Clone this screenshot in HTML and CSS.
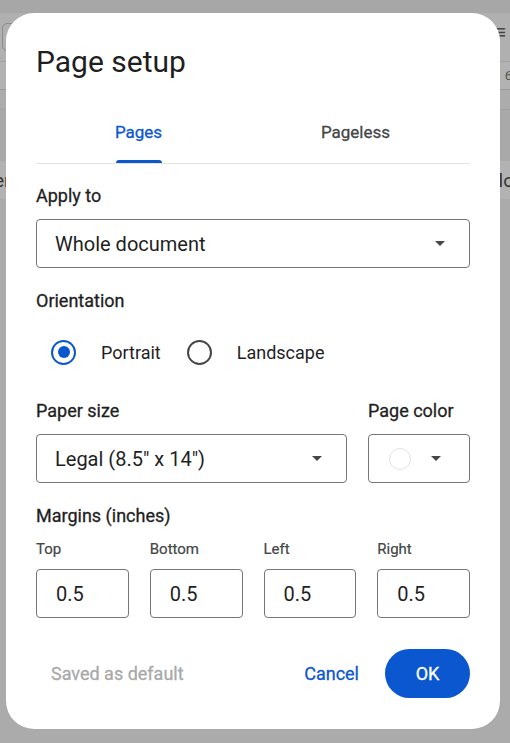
FILE: index.html
```html
<!DOCTYPE html>
<html lang="en">
<head>
    <meta charset="UTF-8">
    <meta name="viewport" content="width=device-width, initial-scale=1.0">
    <title>Page setup</title>
    <link rel="stylesheet" href="styles.css">
</head>
<body>
    <!-- Document behind the scrim -->
    <div class="backdrop">
        <div class="strip-top"></div>
        <div class="toolbar">
            <div class="tool-box"></div>
            <div class="tool-menu">&#8801;</div>
        </div>
        <div class="ruler">
            <span class="ruler-num">6</span>
        </div>
        <div class="ruler-gap"></div>
        <div class="doc-gap"></div>
        <div class="doc-line">
            <span>er</span>
            <span>lo</span>
        </div>
    </div>

    <div class="dialog">
        <h1 class="title">Page setup</h1>

        <div class="tabs">
            <div class="tab-list">
                <div class="tab active">Pages<span class="indicator"></span></div>
                <div class="tab">Pageless</div>
            </div>
        </div>

        <div class="label first">Apply to</div>
        <div class="select">
            <span>Whole document</span>
            <span class="arrow"></span>
        </div>

        <div class="label">Orientation</div>
        <div class="radios">
            <div class="radio checked"><span class="dot"></span></div>
            <span class="radio-label">Portrait</span>
            <div class="radio"></div>
            <span class="radio-label">Landscape</span>
        </div>

        <div class="paper-row">
            <div class="paper-col">
                <div class="label">Paper size</div>
                <div class="select">
                    <span>Legal (8.5" x 14")</span>
                    <span class="arrow"></span>
                </div>
            </div>
            <div class="color-col">
                <div class="label">Page color</div>
                <div class="select color-select">
                    <span class="swatch"></span>
                    <span class="arrow"></span>
                </div>
            </div>
        </div>

        <div class="label">Margins (inches)</div>
        <div class="margins">
            <div class="margin-field">
                <div class="small-label">Top</div>
                <div class="input">0.5</div>
            </div>
            <div class="margin-field">
                <div class="small-label">Bottom</div>
                <div class="input">0.5</div>
            </div>
            <div class="margin-field">
                <div class="small-label">Left</div>
                <div class="input">0.5</div>
            </div>
            <div class="margin-field">
                <div class="small-label">Right</div>
                <div class="input">0.5</div>
            </div>
        </div>

        <div class="footer">
            <span class="saved">Saved as default</span>
            <button class="btn-text">Cancel</button>
            <button class="btn-ok">OK</button>
        </div>
    </div>
</body>
</html>
```

FILE: styles.css
```css
:root {
    --blue: #0b57d0;
    --text: #1f1f1f;
    --muted: #444746;
    --outline: #747775;
}

* {
    margin: 0;
    padding: 0;
    box-sizing: border-box;
    font-family: Roboto, 'Liberation Sans', sans-serif;
}

body {
    width: 510px;
    height: 743px;
    overflow: hidden;
    position: relative;
    background: #ababab;
}

/* backdrop (greyed document) */
.backdrop {
    display: flex;
    flex-direction: column;
}

.strip-top {
    height: 13px;
    background: #a7a7a7;
}

.toolbar {
    height: 49px;
    background: #b0b0b0;
    display: flex;
    justify-content: space-between;
    align-items: center;
    padding: 0 4px 0 2px;
    border-bottom: 1px solid #a2a2a2;
}

.tool-box {
    width: 14px;
    height: 28px;
    border: 1px solid #8c8c8c;
    border-radius: 5px;
}

.tool-menu {
    font-size: 20px;
    color: #444;
    margin-top: -10px;
}

.ruler {
    height: 28px;
    background: #b2b2b2;
    border-bottom: 1px solid #9a9a9a;
    display: flex;
    justify-content: flex-end;
    align-items: center;
}

.ruler-num {
    font-size: 13px;
    color: #555;
    margin-right: -2px;
}

.ruler-gap {
    height: 20px;
    background: #acacac;
    border-bottom: 1px solid #a3a3a3;
}

.doc-gap {
    height: 51px;
    background: #a9a9a9;
}

.doc-line {
    height: 38px;
    background: #b2b2b2;
    display: flex;
    justify-content: space-between;
    align-items: center;
    font-size: 19px;
    color: #333;
    margin: 0 -4px 0 -6px;
}

/* dialog */
.dialog {
    position: absolute;
    left: 6px;
    top: 13px;
    width: 494px;
    height: 716px;
    background: #fff;
    border-radius: 28px;
    padding: 31px 30px 0;
    color: var(--text);
}

.title {
    font-size: 30px;
    font-weight: 400;
    line-height: 36px;
}

.tabs {
    margin-top: 21px;
    border-bottom: 1px solid #e1e3e1;
}

.tab-list {
    display: flex;
    margin: 0 6px 0 -6px;
}

/* Roboto Medium isn't installed, so a thin stroke stands in for weight 500 */
.tab {
    flex: 1;
    height: 62px;
    display: flex;
    justify-content: center;
    align-items: center;
    font-size: 17px;
    color: var(--muted);
    position: relative;
    -webkit-text-stroke: 0.3px currentColor;
}

.tab.active {
    color: var(--blue);
}

.indicator {
    position: absolute;
    bottom: 0;
    left: 50%;
    width: 46px;
    margin-left: -23px;
    height: 3px;
    background: var(--blue);
    border-radius: 3px 3px 0 0;
}

.label {
    font-size: 18px;
    line-height: 24px;
    margin-top: 21px;
    margin-bottom: 11px;
    -webkit-text-stroke: 0.3px currentColor;
}

.label.first {
    margin-top: 20px;
}

.select {
    height: 49px;
    border: 1px solid var(--outline);
    border-radius: 4px;
    display: flex;
    align-items: center;
    justify-content: space-between;
    padding: 0 24px 0 18px;
    font-size: 20px;
}

.arrow {
    width: 0;
    height: 0;
    border-left: 5px solid transparent;
    border-right: 5px solid transparent;
    border-top: 5px solid var(--muted);
}

.radios {
    display: flex;
    align-items: center;
    height: 48px;
    margin-top: 15px;
    padding-left: 15px;
    font-size: 18px;
}

.radio {
    width: 25px;
    height: 25px;
    border: 2px solid var(--muted);
    border-radius: 50%;
    display: flex;
    justify-content: center;
    align-items: center;
}

.radio.checked {
    border-color: var(--blue);
}

.dot {
    width: 12px;
    height: 12px;
    border-radius: 50%;
    background: var(--blue);
}

.radio-label {
    margin-left: 25px;
    margin-right: 26px;
}

.paper-row {
    display: flex;
    gap: 21px;
    margin-top: 2px;
}

.paper-col {
    flex: 1;
}

.color-col {
    width: 102px;
}

.color-select {
    padding: 0 28px 0 20px;
}

.swatch {
    width: 22px;
    height: 22px;
    border-radius: 50%;
    border: 1px solid #e3e3e3;
}

.margins {
    display: grid;
    grid-template-columns: repeat(4, 1fr);
    gap: 21px;
}

.small-label {
    font-size: 15px;
    line-height: 20px;
    color: var(--muted);
    margin-bottom: 10px;
    -webkit-text-stroke: 0.2px currentColor;
}

.input {
    height: 49px;
    border: 1px solid var(--outline);
    border-radius: 4px;
    display: flex;
    align-items: center;
    padding-left: 19px;
    font-size: 20px;
}

.footer {
    display: flex;
    align-items: center;
    margin-top: 31px;
}

.saved {
    padding-left: 15px;
    font-size: 18px;
    color: #a9a9a9;
    margin-right: auto;
    -webkit-text-stroke: 0.3px currentColor;
}

button {
    border: none;
    background: none;
    font-size: 18px;
    cursor: pointer;
    -webkit-text-stroke: 0.3px currentColor;
}

.btn-text {
    color: var(--blue);
    margin-right: 26px;
}

.btn-ok {
    width: 85px;
    height: 49px;
    border-radius: 25px;
    background: var(--blue);
    color: #fff;
}
```
